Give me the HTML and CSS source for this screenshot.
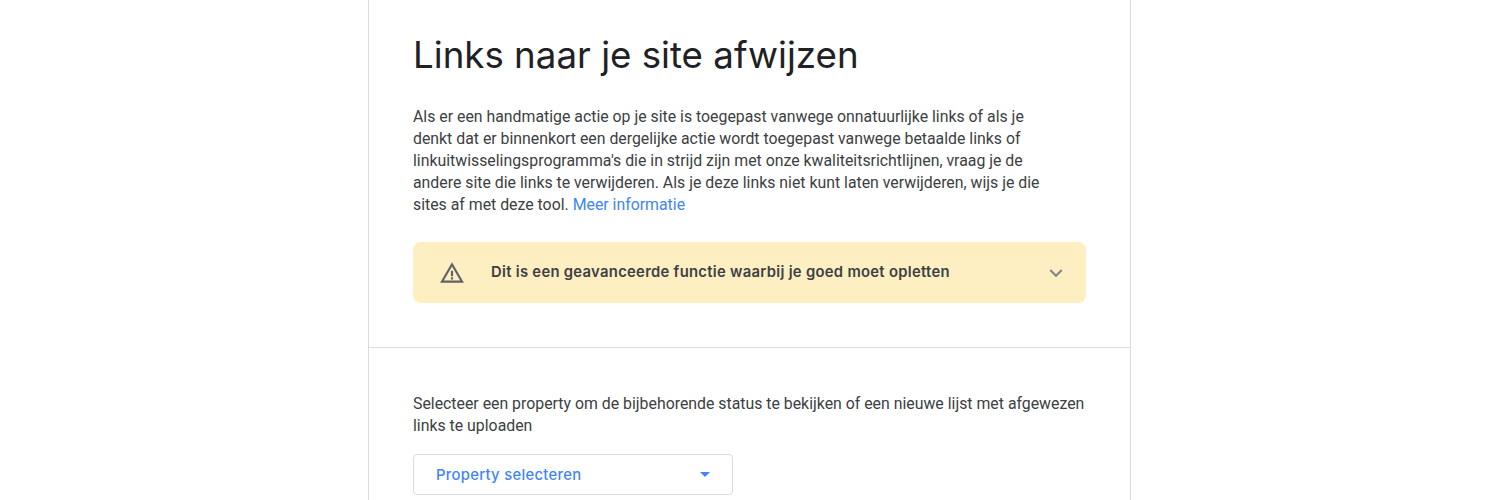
FILE: index.html
```html
<!DOCTYPE html>
<html lang="nl">
<head>
    <meta charset="UTF-8">
    <title>Links naar je site afwijzen</title>
    <link rel="stylesheet" href="styles.css">
</head>
<body>
    <div class="card">
        <section class="intro">
            <h1>Links naar je site afwijzen</h1>
            <p class="text">Als er een handmatige actie op je site is toegepast vanwege onnatuurlijke links of als je<br>denkt dat er binnenkort een dergelijke actie wordt toegepast vanwege betaalde links of<br>linkuitwisselingsprogramma's die in strijd zijn met onze kwaliteitsrichtlijnen, vraag je de<br>andere site die links te verwijderen. Als je deze links niet kunt laten verwijderen, wijs je die<br>sites af met deze tool. <a href="#">Meer informatie</a></p>
            <div class="warning">
                <svg class="warning-icon" width="26" height="26" viewBox="0 0 24 24"><path fill="#5f6368" d="M12 5.99L19.53 19H4.47L12 5.99M12 2L1 21h22L12 2zm1 14h-2v2h2v-2zm0-6h-2v5h2v-5z"/></svg>
                <span class="warning-text">Dit is een geavanceerde functie waarbij je goed moet opletten</span>
                <svg class="chevron" width="26" height="26" viewBox="0 0 24 24"><path fill="#80868b" d="M7.41 8.59L12 13.17l4.59-4.58L18 10l-6 6-6-6z"/></svg>
            </div>
        </section>
        <section class="select-part">
            <p class="text">Selecteer een property om de bijbehorende status te bekijken of een nieuwe lijst met afgewezen<br>links te uploaden</p>
            <div class="select">
                <span>Property selecteren</span>
                <span class="arrow"></span>
            </div>
        </section>
    </div>
</body>
</html>
```

FILE: styles.css
```css
* {
    margin: 0;
    padding: 0;
    box-sizing: border-box;
}

html, body {
    height: 500px;
    overflow: hidden;
}

body {
    background-color: #fff;
    font-family: Roboto, sans-serif;
    color: #3c4043;
}

.card {
    width: 763px;
    height: 500px;
    margin-left: 368px;
    border-left: 1px solid #dadce0;
    border-right: 1px solid #dadce0;
}

.intro {
    height: 348px;
    padding: 30px 44px 0;
    border-bottom: 1px solid #dadce0;
}

h1 {
    font-family: Inter, sans-serif;
    font-size: 36.7px;
    font-weight: 400;
    line-height: 50px;
    color: #202124;
    margin-bottom: 26px;
}

.text {
    font-size: 15.85px;
    line-height: 22px;
}

.text a {
    color: #4285f4;
    text-decoration: none;
}

.warning {
    display: flex;
    align-items: center;
    height: 61px;
    margin-top: 26px;
    padding: 0 17px 0 26px;
    background-color: #feefc3;
    border-radius: 8px;
}

.warning-text {
    flex: 1;
    margin-left: 26px;
    position: relative;
    top: -1px;
    font-family: Inter, sans-serif;
    font-size: 14.8px;
    font-weight: 600;
    letter-spacing: 0.3px;
}

.select-part {
    padding: 45px 44px 0;
}

.select {
    display: flex;
    align-items: center;
    justify-content: space-between;
    width: 320px;
    height: 41px;
    margin-top: 17px;
    padding: 0 22px;
    border: 1px solid #dadce0;
    border-radius: 4px;
    color: #4285f4;
    font-family: Inter, sans-serif;
    font-size: 14.8px;
    font-weight: 500;
    letter-spacing: 0.3px;
}

.arrow {
    width: 0;
    height: 0;
    border-left: 5px solid transparent;
    border-right: 5px solid transparent;
    border-top: 5px solid #4285f4;
}
```
